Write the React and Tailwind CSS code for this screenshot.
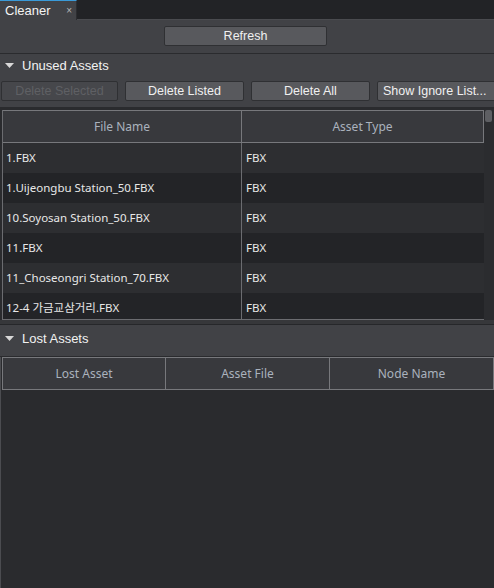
import { useState } from 'react';

const ui = { fontFamily: '"Liberation Sans", Arial, sans-serif' };
const list = { fontFamily: '"Noto Sans", "Noto Sans CJK KR", sans-serif' };

const Btn = ({ children, disabled, className = '' }) => (
  <div
    className={`h-[20px] flex items-center justify-center rounded-[2px] border border-[#2f3033] text-[12.5px] whitespace-nowrap overflow-hidden ${
      disabled ? 'bg-[#46474b] text-[#5f6064]' : 'bg-[#58595d] text-[#f0f0f0]'
    } ${className}`}
    style={ui}
  >
    {children}
  </div>
);

const SectionHeader = ({ title, h }) => (
  <div className={`flex items-center pl-[5px] gap-[8px] shrink-0 ${h}`}>
    <svg width="9" height="6" viewBox="0 0 9 6">
      <path d="M0 0 L9 0 L4.5 5 Z" fill="#d8d8d8" />
    </svg>
    <span className="text-[13px] text-[#f2f2f2]" style={ui}>{title}</span>
  </div>
);

const files = [
  '1.FBX',
  '1.Uijeongbu Station_50.FBX',
  '10.Soyosan Station_50.FBX',
  '11.FBX',
  '11_Choseongri Station_70.FBX',
  '12-4 가금교삼거리.FBX',
];

export default function App() {
  const [rows] = useState(files.map((name) => ({ name, type: 'FBX' })));

  return (
    <div className="w-[494px] h-[588px] flex flex-col overflow-hidden bg-[#414246]">
      {/* tab strip */}
      <div className="h-[20px] flex bg-[#222326] shrink-0">
        <div className="w-[77px] flex items-center justify-between pl-[5px] pr-[4px] bg-[#414246] border-t border-[#3a9ad8] border-r border-r-[#2c2d30]">
          <span className="text-[13px] text-[#f4f4f4] leading-none" style={ui}>Cleaner</span>
          <span className="text-[10px] text-[#b8b8b8] leading-none" style={ui}>×</span>
        </div>
        <div className="flex-1 border-b border-[#4a4b4f]" />
      </div>

      {/* refresh */}
      <div className="pt-[6px] pb-[7px] pl-[164px] shrink-0">
        <Btn className="w-[163px]">Refresh</Btn>
      </div>
      <div className="h-[1px] bg-[#2a2b2e] shrink-0" />

      {/* unused assets */}
      <SectionHeader title="Unused Assets" h="h-[23px]" />
      <div className="flex gap-[7px] pl-[1px] pt-[4px] pb-[6px] shrink-0">
        <Btn disabled className="w-[117px] shrink-0">Delete Selected</Btn>
        <Btn className="w-[119px] shrink-0">Delete Listed</Btn>
        <Btn className="w-[119px] shrink-0">Delete All</Btn>
        <Btn className="w-[119px] shrink-0 justify-start pl-[5px]">Show Ignore List...</Btn>
      </div>
      <div className="h-[2px] bg-[#2a2b2e] shrink-0" />

      {/* unused table */}
      <div className="h-[211px] flex bg-[#2a2b2e] shrink-0" style={list}>
        <div className="w-[484px] pl-[2px] pt-[1px] flex flex-col">
          <div className="flex-1 flex flex-col border-l border-b border-[#6b6c70] overflow-hidden">
            <div className="h-[33px] flex bg-[#38393d] border border-l-0 border-[#77787c] shrink-0">
              <div className="w-[239px] flex items-center justify-center border-r border-[#77787c] text-[12px] text-[#aab2bd]">File Name</div>
              <div className="flex-1 flex items-center justify-center text-[12px] text-[#aab2bd]">Asset Type</div>
            </div>
            {rows.map((r, i) => (
              <div key={r.name} className={`h-[30px] flex shrink-0 ${i % 2 === 0 ? 'bg-[#2d2e31]' : 'bg-[#232427]'}`}>
                <div className="w-[239px] flex items-center pl-[3px] border-r border-[#6b6c70] text-[11.5px] text-[#e8e8e8] whitespace-nowrap">{r.name}</div>
                <div className="flex-1 flex items-center pl-[4px] text-[11.5px] text-[#e8e8e8]">{r.type}</div>
              </div>
            ))}
          </div>
        </div>
        <div className="flex-1 pt-[1px] pl-[1px] bg-[#2b2c2f]">
          <div className="w-[7px] h-[12px] rounded-[2px] bg-[#5e5f63]" />
        </div>
      </div>

      {/* splitter */}
      <div className="h-[5px] bg-[#36373a] border-b border-[#26272a] shrink-0" />

      {/* lost assets */}
      <SectionHeader title="Lost Assets" h="h-[27px]" />
      <div className="h-[5px] border-b border-[#2a2b2e] shrink-0" />
      <div className="flex-1 flex flex-col bg-[#2a2b2e] border-l border-[#4b4c50] pl-[1px]" style={list}>
        <div className="h-[33px] flex bg-[#38393d] border border-[#77787c] shrink-0">
          <div className="w-[163px] flex items-center justify-center border-r border-[#77787c] text-[12px] text-[#aab2bd]">Lost Asset</div>
          <div className="w-[164px] flex items-center justify-center border-r border-[#77787c] text-[12px] text-[#aab2bd]">Asset File</div>
          <div className="flex-1 flex items-center justify-center text-[12px] text-[#aab2bd]">Node Name</div>
        </div>
      </div>
    </div>
  );
}
